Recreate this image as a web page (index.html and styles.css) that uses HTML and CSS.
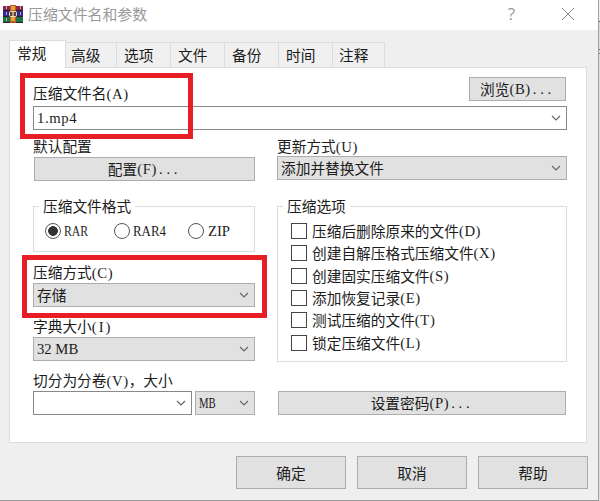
FILE: index.html
```html
<!DOCTYPE html>
<html lang="zh-CN">
<head>
<meta charset="utf-8">
<title>压缩文件名和参数</title>
<link rel="stylesheet" href="styles.css">
</head>
<body>
<div class="desktop">
<main class="dialog">
  <header class="titlebar">
    <svg class="logo" width="20" height="19" viewBox="0 0 20 19">
      <path fill="#8d2448" d="M0 1h20v5H0z"/><path fill="#302b91" d="M0 6h20v6H0z"/><path fill="#197346" d="M0 12h20v6H0z"/>
      <path fill="#351d29" d="M0 5h20v1H0zM0 11h20v1H0zM0 17h20v1H0z"/>
      <path stroke="#c9a3bd" d="M3.5 1v3M3.5 7v3M3.5 13v3M17.5 1v3M17.5 7v3"/>
      <path fill="#b45b20" d="M7 0h6v18H7z"/><path fill="#e5a33b" d="M8 1h4v4H8zM8 12h4v4H8z"/>
      <rect x="6.5" y="6.5" width="7" height="5" rx="1" fill="#68402e" stroke="#f2ddb5"/>
      <path stroke="#fff" d="M10 7v4"/>
    </svg>
    <h1>压缩文件名和参数</h1>
    <span class="help">?</span>
    <svg class="close" width="14" height="14" viewBox="0 0 14 14"><path d="M1 1l12 12M13 1L1 13"/></svg>
  </header>

  <nav class="tabs">
    <span class="tab active">常规</span><span class="tab">高级</span><span class="tab">选项</span><span class="tab">文件</span><span class="tab">备份</span><span class="tab">时间</span><span class="tab last">注释</span>
  </nav>

  <section class="panel">
    <div class="name-row">
      <span class="label">压缩文件名<i class="key">(A)</i></span>
      <span class="button browse">浏览<i class="key">(B)</i><i class="dots">...</i></span>
    </div>
    <div class="combo editable"><i class="file">1.mp4</i><svg class="arrow" viewBox="0 0 10 6"><path d="M1 1l4 4 4-4"/></svg></div>

    <div class="columns">
      <div class="left">
        <div class="label">默认配置</div>
        <div class="button config">配置<i class="key">(F)</i><i class="dots">...</i></div>
        <div class="group formats">
          <span class="legend">压缩文件格式</span>
          <span class="radio checked"></span><i class="format"><b class="rar">RAR</b></i>
          <span class="radio"></span><i class="format wide"><b class="rar4">RAR4</b></i>
          <span class="radio"></span><i class="format"><b>ZIP</b></i>
        </div>
        <div class="label spaced">压缩方式<i class="key">(C)</i></div>
        <div class="combo">存储<svg class="arrow" viewBox="0 0 10 6"><path d="M1 1l4 4 4-4"/></svg></div>
        <div class="label spaced">字典大小<i class="key narrow">(I)</i></div>
        <div class="combo"><i>32 MB</i><svg class="arrow" viewBox="0 0 10 6"><path d="M1 1l4 4 4-4"/></svg></div>
        <div class="label spaced">切分为分卷<i class="key">(V)</i>，大小</div>
        <div class="split">
          <div class="combo editable"><svg class="arrow" viewBox="0 0 10 6"><path d="M1 1l4 4 4-4"/></svg></div>
          <div class="combo unit"><i><b>MB</b></i><svg class="arrow" viewBox="0 0 10 6"><path d="M1 1l4 4 4-4"/></svg></div>
        </div>
      </div>
      <div class="right">
        <div class="label">更新方式<i class="key">(U)</i></div>
        <div class="combo update">添加并替换文件<svg class="arrow" viewBox="0 0 10 6"><path d="M1 1l4 4 4-4"/></svg></div>
        <div class="group options">
          <span class="legend">压缩选项</span>
          <div class="option"><span class="box"></span>压缩后删除原来的文件<i class="key">(D)</i></div>
          <div class="option"><span class="box"></span>创建自解压格式压缩文件<i class="key">(X)</i></div>
          <div class="option"><span class="box"></span>创建固实压缩文件<i class="key">(S)</i></div>
          <div class="option"><span class="box"></span>添加恢复记录<i class="key">(E)</i></div>
          <div class="option"><span class="box"></span>测试压缩的文件<i class="key">(T)</i></div>
          <div class="option"><span class="box"></span>锁定压缩文件<i class="key">(L)</i></div>
        </div>
        <div class="button password">设置密码<i class="key">(P)</i><i class="dots">...</i></div>
      </div>
    </div>
  </section>

  <footer class="actions">
    <span class="button">确定</span><span class="button">取消</span><span class="button">帮助</span>
  </footer>
  <div class="marker marker-name"></div>
  <div class="marker marker-method"></div>
</main>
<div class="backdrop"></div>
</div>
</body>
</html>
```
FILE: styles.css
```css
* { box-sizing: border-box; }
body {
  margin: 0;
  overflow: hidden;
  background: #ededed;
  color: #1c1c1c;
  font: 14.7px/18px "Noto Sans CJK SC", sans-serif;
  white-space: nowrap;
}
i, b { font-style: normal; font-weight: 400; }
i { font-family: "Liberation Serif", serif; }
.desktop { display: flex; width: 600px; height: 501px; }
.dialog {
  position: relative;
  width: 599px;
  height: 501px;
  background: #efefef;
  border-right: 1px solid #a0a0a0;
  border-bottom: 1px solid #999;
}
.backdrop { width: 1px; background: linear-gradient(#eee 21px, #555 21px 22px, #ddd 22px 49px, #666 49px 50px, #ddd 50px 53px, #777 53px 54px, #ddd 54px); }

.titlebar { display: flex; align-items: center; height: 30px; padding: 0 23px 2px 3px; background: #fff; color: #999; }
.titlebar h1 { flex: 1; margin: 0 0 0 5px; font-size: 14.9px; font-weight: 400; }
.help { margin-right: 46px; font: 17px/20px "Open Sans", sans-serif; color: #999; }
.close { fill: none; stroke: #888; }

.tabs { display: flex; align-items: flex-end; height: 38px; padding-left: 9px; }
.tab {
  width: 54px;
  height: 26px;
  padding: 3px 0 0 7px;
  border-top: 1px solid #dcdcdc;
  border-right: 1px solid #dcdcdc;
  border-bottom: 1px solid #dcdcdc;
  background: #f0f0f0;
}
.tab:nth-child(2) { width: 51px; padding-left: 5px; }
.tab.last { width: 52px; padding-left: 6px; }
.tab.active { width: 57px; height: 28px; padding: 3px 0 0 7px; border-left: 1px solid #dcdcdc; border-bottom: 0; background: #fff; }

.panel {
  width: 578px;
  height: 376px;
  margin: -1px 0 0 9px;
  padding: 10px 0 0 23px;
  border: 1px solid #dcdcdc;
  border-top: 0;
  background: linear-gradient(#dcdcdc, #dcdcdc) 57px 0 / 520px 1px no-repeat #fff;
}
.name-row { display: flex; justify-content: space-between; align-items: flex-start; width: 533px; height: 24px; }
.name-row .label { margin-top: 7px; }
.label { height: 18px; line-height: 17px; }
.key { letter-spacing: .6px; }
.narrow { letter-spacing: 2px; }
.dots { margin-left: 2px; letter-spacing: 3.7px; }
.button {
  display: flex;
  align-items: center;
  justify-content: center;
  height: 24px;
  border: 1px solid #adadad;
  background: #e1e1e1;
}
.browse { width: 97px; }
.combo {
  display: flex;
  align-items: center;
  justify-content: space-between;
  width: 222px;
  height: 24px;
  padding: 0 5px 1px 3px;
  border: 1px solid #adadad;
  background: #e1e1e1;
}
.combo.editable { border-color: #888; background: #fff; }
.panel > .combo { width: 534px; margin-top: 5px; }
.file { letter-spacing: .6px; }
.arrow { width: 10px; height: 6px; margin-left: auto; fill: none; stroke: #666; stroke-width: 1.2; }

.columns { display: flex; gap: 22px; padding-top: 7px; }
.left { width: 222px; }
.right { width: 290px; }
.config { width: 221px; margin: 2px 0 0 1px; }
.group { position: relative; border: 1px solid #dcdcdc; }
.legend { position: absolute; top: -10px; left: 5px; padding: 0 4px; background: #fff; }
.formats { display: flex; align-items: center; height: 46px; margin-top: 25px; padding: 3px 0 0 11px; }
.radio { flex: none; width: 16px; height: 16px; border: 1px solid #555; border-radius: 50%; background: #fff; }
.radio.checked { background: radial-gradient(circle, #333 0 4.5px, #fff 5.2px); }
.format { flex: none; width: 50px; margin-left: 3px; }
.format.wide { width: 55px; }
.format:last-child { width: 30px; margin-left: 4px; }
.format b, .unit b { display: inline-block; transform-origin: left center; }
.rar { transform: scaleX(.8); }
.rar4 { transform: scaleX(.88); }
.spaced { margin-top: 11px; }
.spaced + div { margin-top: 2px; }
.spaced + .combo { margin-bottom: -1px; }
.split { display: flex; justify-content: space-between; }
.split .combo { width: 159px; }
.split .unit { width: 60px; }
.unit i { width: 18px; }
.unit b { transform: scaleX(.73); }

.combo.update { width: 290px; margin-top: 1px; }
.options { height: 156px; margin-top: 26px; padding: 13px 0 0 13px; }
.option { display: flex; align-items: center; height: 22.3px; }
.box { width: 16px; height: 16px; margin-right: 5px; border: 1px solid #444; background: #fff; }
.password { width: 288px; margin: 29px 0 0 1px; }

.actions { display: flex; gap: 11px; padding: 13px 0 0 236px; }
.actions .button { width: 110px; height: 33px; }
.marker { position: absolute; border: 5px solid #e81e26; }
.marker-name { left: 20px; top: 73px; width: 173px; height: 66px; }
.marker-method { left: 22px; top: 255px; width: 245px; height: 63px; }
```
